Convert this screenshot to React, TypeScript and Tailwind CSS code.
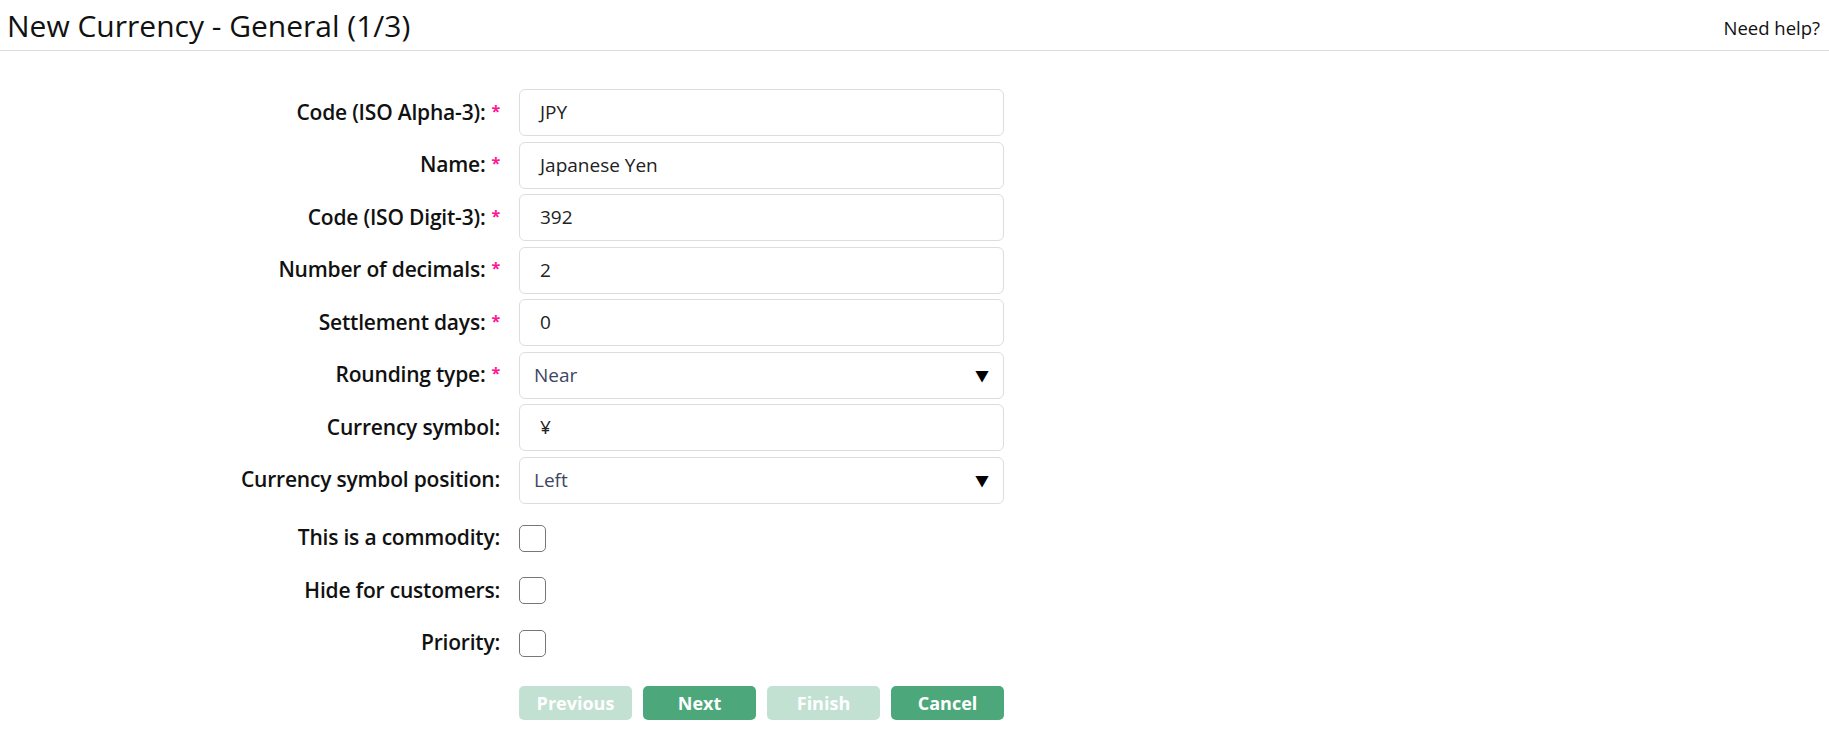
import React from 'react';

const font = { fontFamily: '"Open Sans", "Noto Sans CJK JP", sans-serif' };

type Field = { label: string; required?: boolean; kind: 'text' | 'select'; value: string };

const fields: Field[] = [
  { label: 'Code (ISO Alpha-3):', required: true, kind: 'text', value: 'JPY' },
  { label: 'Name:', required: true, kind: 'text', value: 'Japanese Yen' },
  { label: 'Code (ISO Digit-3):', required: true, kind: 'text', value: '392' },
  { label: 'Number of decimals:', required: true, kind: 'text', value: '2' },
  { label: 'Settlement days:', required: true, kind: 'text', value: '0' },
  { label: 'Rounding type:', required: true, kind: 'select', value: 'Near' },
  { label: 'Currency symbol:', kind: 'text', value: '¥' },
  { label: 'Currency symbol position:', kind: 'select', value: 'Left' },
];

const checks = ['This is a commodity:', 'Hide for customers:', 'Priority:'];

function Label({ text, required }: { text: string; required?: boolean }) {
  return (
    <div className="w-[500px] shrink-0 text-right text-[21px] font-semibold text-[#111] tracking-[-0.2px]">
      {text}
      {required && <sup className="ml-[6px] text-[16px] font-bold text-[#ff1493] top-[-3px]">*</sup>}
    </div>
  );
}

export default function App() {
  return (
    <div className="min-h-screen bg-white" style={font}>
      {/* Header */}
      <div className="flex h-[51px] items-center justify-between border-b border-[#dcdcdc] pl-[7px] pr-[9px]">
        <h1 className="text-[30px] font-medium text-[#111] leading-none pt-[2px]">New Currency - General (1/3)</h1>
        <a className="text-[18.5px] text-[#111] pt-[6px]">Need help?</a>
      </div>

      {/* Form */}
      <div className="mt-[38px] flex flex-col gap-[5.5px]">
        {fields.map((f) => (
          <div key={f.label} className="flex h-[47px] items-center">
            <Label text={f.label} required={f.required} />
            <div className="ml-[19px] flex h-full w-[485px] items-center justify-between rounded-[6px] border border-[#dddddd] bg-white">
              {f.kind === 'text' ? (
                <span className="pl-[20px] text-[19px] text-[#222]">{f.value}</span>
              ) : (
                <>
                  <span className="pl-[14px] text-[19px] text-[#3d4663]">{f.value}</span>
                  <span className="pr-[14px] text-[14px] text-black">▼</span>
                </>
              )}
            </div>
          </div>
        ))}

        <div className="mt-[5.5px] flex flex-col gap-[5.5px]">
          {checks.map((c) => (
            <div key={c} className="flex h-[47px] items-center">
              <Label text={c} />
              <div className="ml-[19px] h-[27px] w-[27px] rounded-[5px] border-[1.5px] border-[#777] bg-white" />
            </div>
          ))}
        </div>

        <div className="mt-[14px] flex gap-[11px] pl-[519px]">
          <button className="h-[34px] w-[113px] rounded-[5px] bg-[#c2e1d3] text-[18px] font-bold text-white">Previous</button>
          <button className="h-[34px] w-[113px] rounded-[5px] bg-[#4ca87a] text-[18px] font-bold text-white">Next</button>
          <button className="h-[34px] w-[113px] rounded-[5px] bg-[#c2e1d3] text-[18px] font-bold text-white">Finish</button>
          <button className="h-[34px] w-[113px] rounded-[5px] bg-[#4ca87a] text-[18px] font-bold text-white">Cancel</button>
        </div>
      </div>
    </div>
  );
}
